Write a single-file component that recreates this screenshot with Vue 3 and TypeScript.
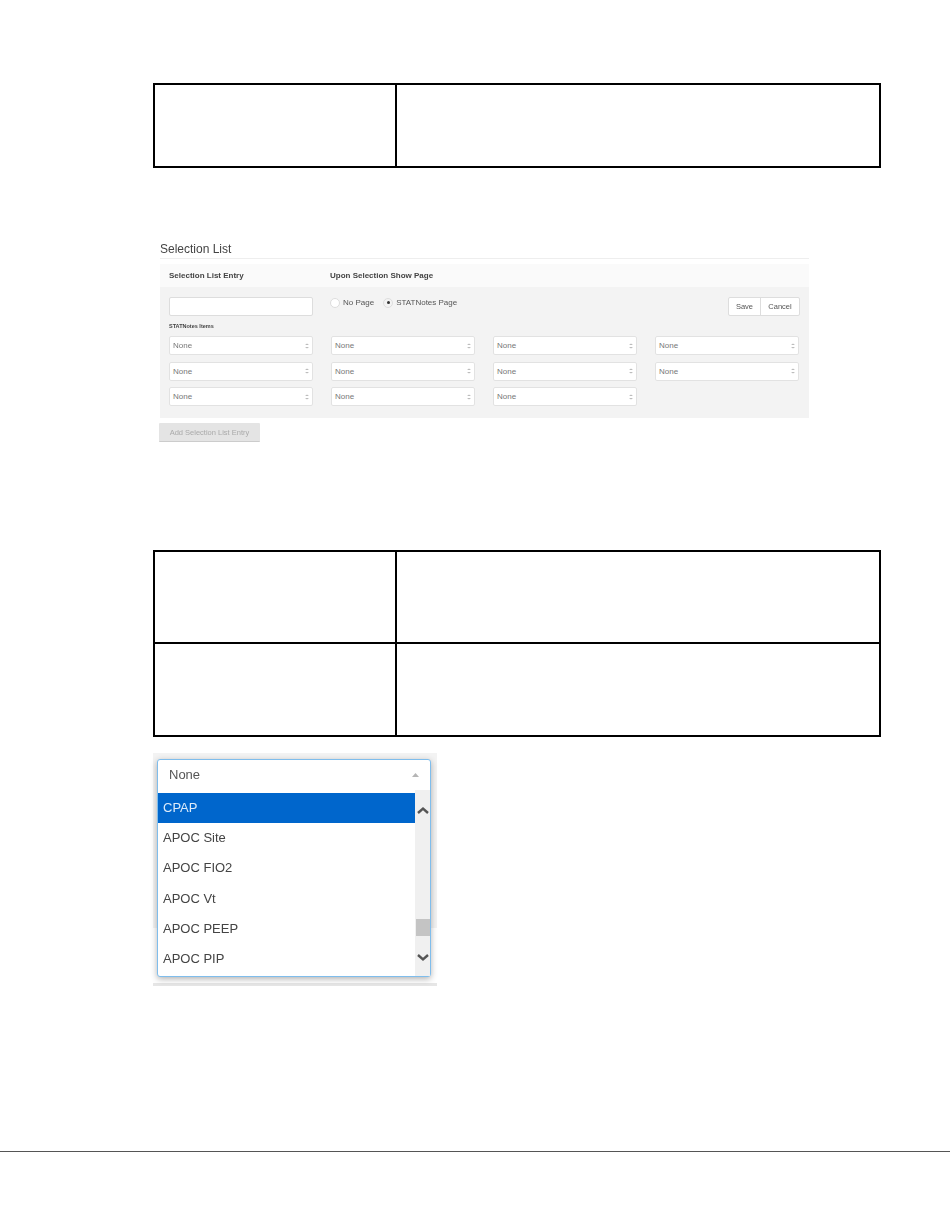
<script setup lang="ts">
const selectRows: number[] = [4, 4, 3]
const options: string[] = ['CPAP', 'APOC Site', 'APOC FIO2', 'APOC Vt', 'APOC PEEP', 'APOC PIP']
</script>

<template>
  <div class="page">
    <div class="doc-table first">
      <div class="cell row-a"></div>
      <div class="cell row-a last"></div>
    </div>

    <section class="selection">
      <h3 class="title">Selection List</h3>
      <div class="panel">
        <div class="panel-head">
          <span class="head-a">Selection List Entry</span>
          <span class="head-b">Upon Selection Show Page</span>
        </div>
        <div class="panel-body">
          <div class="entry-row">
            <div class="text-input"></div>
            <div class="radios">
              <span class="radio"></span>
              <span class="radio-label">No Page</span>
              <span class="radio on"></span>
              <span class="radio-label">STATNotes Page</span>
            </div>
            <div class="btn-group">
              <span class="btn-part">Save</span>
              <span class="btn-part">Cancel</span>
            </div>
          </div>
          <div class="items-label">STATNotes Items</div>
          <div class="select-grid">
            <template v-for="(count, r) in selectRows" :key="r">
              <div v-for="c in count" :key="c" class="select">
                <span>None</span>
                <svg width="4" height="6" viewBox="0 0 4 6"><path d="M0 2 2 0.5 4 2zM0 4 2 5.5 4 4z" fill="#bbb" /></svg>
              </div>
            </template>
          </div>
        </div>
      </div>
      <div class="add-btn">Add Selection List Entry</div>
    </section>

    <div class="doc-table second">
      <div class="cell row-b"></div>
      <div class="cell row-b last"></div>
      <div class="cell row-c bottom"></div>
      <div class="cell row-c last bottom"></div>
    </div>

    <div class="dropdown-shot">
      <div class="dropdown">
        <div class="dropdown-top">
          <span>None</span>
          <svg width="7" height="4" viewBox="0 0 7 4"><path d="M0 4 3.5 0 7 4z" fill="#b5b5b5" /></svg>
        </div>
        <div class="dropdown-list">
          <ul class="options">
            <li v-for="(o, i) in options" :key="o" :class="{ active: i === 0 }">{{ o }}</li>
          </ul>
          <div class="scrollbar">
            <svg class="arrow-up" width="14" height="9" viewBox="0 0 14 9"><path d="M2 7 7 2.5 12 7" fill="none" stroke="#555" stroke-width="2.4" /></svg>
            <div class="thumb"></div>
            <svg class="arrow-down" width="14" height="9" viewBox="0 0 14 9"><path d="M2 2 7 6.5 12 2" fill="none" stroke="#555" stroke-width="2.4" /></svg>
          </div>
        </div>
      </div>
    </div>

    <div class="footer-line"></div>
  </div>
</template>

<style>
body {
  background: #fff;
}
</style>

<style scoped>
.page {
  height: 1229px;
  box-sizing: border-box;
  padding-top: 83px;
  overflow: hidden;
  font-family: "Liberation Sans", Arial, sans-serif;
}

.doc-table {
  display: grid;
  grid-template-columns: 242px 1fr;
  width: 728px;
  margin-left: 153px;
  box-sizing: border-box;
  border: 2px solid #000;
}

.cell {
  border-right: 2px solid #000;
  border-bottom: 2px solid #000;
}

.cell.last {
  border-right: none;
}

.cell.bottom {
  border-bottom: none;
}

.first .cell {
  border-bottom: none;
  height: 81px;
}

.row-b {
  height: 90px;
}

.row-c {
  height: 91px;
}

.selection {
  width: 649px;
  margin-left: 160px;
  margin-top: 73px;
  filter: blur(0.6px);
}

.title {
  margin: 0;
  font-size: 12px;
  line-height: 16px;
  height: 17px;
  font-weight: 400;
  color: #444;
  border-bottom: 1px solid #eee;
}

.panel {
  margin-top: 5px;
  background: #f3f3f3;
  height: 154px;
  box-sizing: border-box;
}

.panel-head {
  display: flex;
  height: 23px;
  align-items: center;
  background: #fafafa;
  font-size: 8px;
  font-weight: 700;
  color: #444;
  padding-left: 9px;
}

.head-a {
  width: 161px;
}

.panel-body {
  padding: 10px 9px 0 9px;
}

.entry-row {
  display: flex;
  align-items: flex-start;
  height: 19px;
}

.text-input {
  width: 144px;
  height: 19px;
  box-sizing: border-box;
  background: #fff;
  border: 1px solid #ddd;
  border-radius: 2px;
}

.radios {
  display: flex;
  align-items: center;
  gap: 3px;
  margin-left: 17px;
  font-size: 8px;
  color: #555;
  height: 11px;
}

.radio {
  width: 10px;
  height: 10px;
  box-sizing: border-box;
  border-radius: 50%;
  background: #fff;
  border: 1px solid #ddd;
  position: relative;
}

.radio.on {
  background: #f3f3f3;
}

.radio.on::after {
  content: "";
  position: absolute;
  left: 2.5px;
  top: 2.5px;
  width: 3px;
  height: 3px;
  border-radius: 50%;
  background: #333;
}

.radio-label {
  margin-right: 6px;
}

.btn-group {
  display: flex;
  margin-left: auto;
  height: 19px;
  box-sizing: border-box;
  background: #fff;
  border: 1px solid #ddd;
  border-radius: 2px;
  font-size: 7.5px;
  color: #555;
}

.btn-part {
  display: flex;
  align-items: center;
  justify-content: center;
  width: 31px;
}

.btn-part + .btn-part {
  width: 38px;
  border-left: 1px solid #ddd;
}

.items-label {
  margin-top: 7px;
  height: 13px;
  line-height: 6px;
  font-size: 5.5px;
  font-weight: 700;
  color: #444;
}

.select-grid {
  display: grid;
  grid-template-columns: repeat(4, 144px);
  column-gap: 18px;
  row-gap: 6.5px;
}

.select {
  display: flex;
  justify-content: space-between;
  align-items: center;
  height: 19px;
  box-sizing: border-box;
  padding: 0 3px;
  background: #fff;
  border: 1px solid #e2e2e2;
  border-radius: 2px;
  font-size: 8px;
  color: #777;
}

.add-btn {
  display: flex;
  align-items: center;
  justify-content: center;
  width: 101px;
  height: 18px;
  margin-top: 5px;
  margin-left: -1px;
  background: #e4e4e4;
  border-bottom: 1px solid #ccc;
  border-radius: 1px;
  font-size: 7.5px;
  color: #aaa;
}

.second {
  margin-top: 108px;
}

.dropdown-shot {
  width: 284px;
  height: 233px;
  margin-left: 153px;
  margin-top: 16px;
  box-sizing: border-box;
  padding: 6px 6px 0 4px;
  background: linear-gradient(#f3f3f3 175px, #fff 175px, #fff 230px, #e6e6e6 230px);
}

.dropdown {
  height: 218px;
  box-sizing: border-box;
  background: #fff;
  border: 1px solid #7fbdec;
  border-radius: 3px;
  box-shadow: 0 2px 6px rgba(0, 0, 0, 0.3);
  filter: blur(0.3px);
}

.dropdown-top {
  display: flex;
  justify-content: space-between;
  align-items: center;
  height: 33px;
  box-sizing: border-box;
  padding: 0 11px 4px;
  font-size: 13px;
  color: #555;
}

.dropdown-list {
  display: flex;
}

.options {
  flex: 1;
  margin: 0;
  padding: 0;
  list-style: none;
  font-size: 13px;
  color: #444;
}

.options li {
  height: 30.2px;
  line-height: 29px;
  padding-left: 5px;
}

.options li.active {
  background: #0066cc;
  color: #dcebfa;
}

.scrollbar {
  position: relative;
  width: 15px;
  height: 186px;
  margin-top: -3px;
  background: #f0f0f0;
}

.arrow-up {
  position: absolute;
  left: 1px;
  top: 16px;
}

.arrow-down {
  position: absolute;
  left: 1px;
  bottom: 14px;
}

.thumb {
  position: absolute;
  left: 1px;
  width: 14px;
  top: 129px;
  height: 17px;
  background: #c4c4c4;
}

.footer-line {
  height: 1px;
  margin-top: 165px;
  background: #555;
}
</style>
